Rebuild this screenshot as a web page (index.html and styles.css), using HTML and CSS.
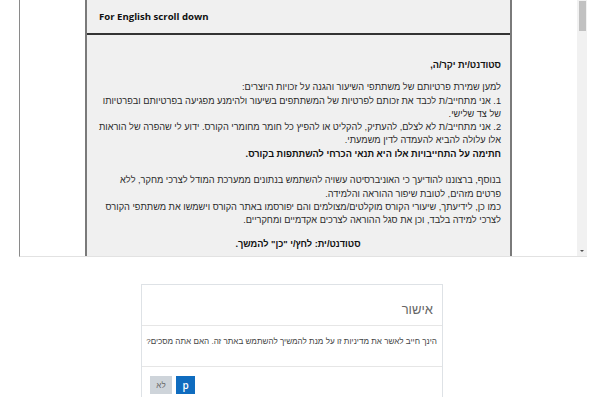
FILE: index.html
```html
<!DOCTYPE html>
<html lang="he">
<head>
<meta charset="utf-8">
<link rel="stylesheet" href="styles.css">
</head>
<body>
<div class="frame">
  <div class="viewport">
    <div class="policy">
      <div class="policy-head" dir="ltr">For English scroll down</div>
      <div class="policy-body" dir="rtl">
        <p class="strong">סטודנט/ית יקר/ה,</p>
        <p>למען שמירת פרטיותם של משתתפי השיעור והגנה על זכויות היוצרים:<br>1. אני מתחייב/ת לכבד את זכותם לפרטיות של המשתתפים בשיעור ולהימנע מפגיעה בפרטיותם ובפרטיותו של צד שלישי.<br>2. אני מתחייב/ת לא לצלם, להעתיק, להקליט או להפיץ כל חומר מחומרי הקורס. ידוע לי שהפרה של הוראות אלו עלולה להביא להעמדה לדין משמעתי.<br><b>חתימה על התחייבויות אלו היא תנאי הכרחי להשתתפות בקורס.</b><br><br>בנוסף, ברצוננו להודיעך כי האוניברסיטה עשויה להשתמש בנתונים ממערכת המודל לצרכי מחקר, ללא פרטים מזהים, לטובת שיפור ההוראה והלמידה.<br>כמו כן, לידיעתך, שיעורי הקורס מוקלטים/מצולמים והם יפורסמו באתר הקורס וישמשו את משתתפי הקורס לצרכי למידה בלבד, וכן את סגל ההוראה לצרכים אקדמיים ומחקריים.</p>
        <p class="strong center">סטודנט/ית: לחץ/י "כן" להמשך.</p>
      </div>
    </div>
  </div>
  <div class="scrollbar">
    <div class="thumb"></div>
    <div class="arrow"></div>
  </div>
</div>

<div class="dialog" dir="rtl">
  <div class="dialog-head">אישור</div>
  <div class="dialog-body">הינך חייב לאשר את מדיניות זו על מנת להמשיך להשתמש באתר זה. האם אתה מסכים?</div>
  <div class="dialog-foot">
    <button class="btn btn-primary">p</button>
    <button class="btn btn-secondary">לא</button>
  </div>
</div>
</body>
</html>
```

FILE: styles.css
```css
html, body {
  margin: 0;
  padding: 0;
  background: #fff;
}

.frame {
  margin-left: 19px;
  width: 568px;
  height: 257px;
  display: flex;
  border-left: 1px solid #8a8a8a;
  border-bottom: 1px solid #e2e2e2;
  box-sizing: border-box;
  overflow: hidden;
}

.viewport {
  flex: 1;
  display: flex;
  justify-content: center;
  overflow: hidden;
}

.policy {
  width: 427px;
  flex: none;
  box-sizing: border-box;
  border-left: 2px solid #7a7a7a;
  border-right: 2px solid #7a7a7a;
  background: #f0f0f0;
}

.policy-head {
  font-family: "Open Sans", "Liberation Sans", sans-serif;
  font-weight: 700;
  font-size: 9.6px;
  line-height: 13px;
  color: #111;
  padding: 10px 12px 10px;
  border-bottom: 2px solid #333;
}

.policy-body {
  font-family: "Liberation Sans", "DejaVu Sans", sans-serif;
  font-size: 9.2px;
  line-height: 13.3px;
  color: #2a2a2a;
  padding: 24px 9px 0 8px;
  text-align: right;
}

.policy-body p {
  margin: 0 0 9px;
}

.policy-body .strong {
  font-weight: 700;
  color: #111;
}

.policy-body b {
  color: #111;
}

.policy-body .center {
  text-align: center;
  margin-top: 10px;
}

.scrollbar {
  width: 10px;
  flex: none;
  background: #f1f1f1;
  display: flex;
  flex-direction: column;
  align-items: center;
  justify-content: space-between;
  padding: 1px 0 4px;
  box-sizing: border-box;
}

.thumb {
  width: 7px;
  height: 30px;
  background: #c1c1c1;
}

.arrow {
  width: 0;
  height: 0;
  border-left: 2px solid transparent;
  border-right: 2px solid transparent;
  border-top: 2px solid #505050;
}

.dialog {
  margin: 27px 0 0 141px;
  width: 302px;
  box-sizing: border-box;
  border: 1px solid #dee2e6;
  background: #fff;
}

.dialog-head {
  font-family: "Liberation Sans", "Open Sans", sans-serif;
  font-size: 13px;
  line-height: 16px;
  color: #666;
  padding: 17px 9px 7px;
  border-bottom: 1px solid #e6e6e6;
}

.dialog-body {
  font-family: "Liberation Sans", "Open Sans", sans-serif;
  font-size: 8.1px;
  line-height: 12px;
  color: #444;
  white-space: nowrap;
  padding: 10px 5px 18px;
  border-bottom: 1px solid #e6e6e6;
}

.dialog-foot {
  display: flex;
  justify-content: flex-end;
  gap: 4px;
  padding: 9px 8px 10px;
}

.btn {
  border: 0;
  margin: 0;
  height: 18px;
  padding: 0;
  font-family: "Open Sans", "Liberation Sans", sans-serif;
  border-radius: 0;
}

.btn-primary {
  width: 19px;
  background: #0f6cbf;
  color: #fff;
  font-size: 10px;
  font-weight: 600;
}

.btn-secondary {
  width: 22px;
  background: #ced4da;
  color: #666;
  font-size: 8px;
  font-family: "Liberation Sans", sans-serif;
}
```
